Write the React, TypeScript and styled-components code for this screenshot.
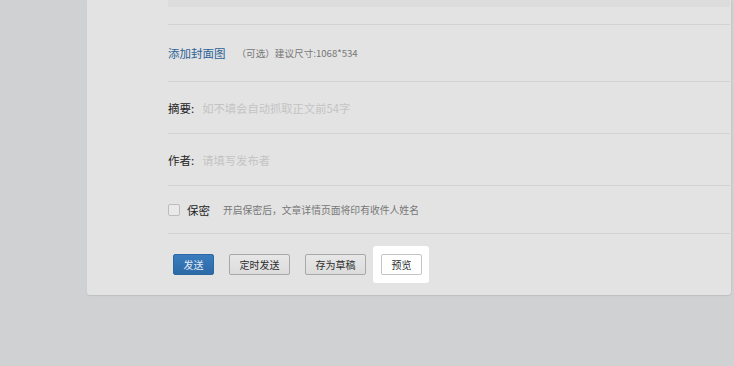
import React from "react";
import styled, { createGlobalStyle } from "styled-components";

const GlobalStyle = createGlobalStyle`
  html, body {
    margin: 0;
    padding: 0;
    background: #d0d1d3;
    font-family: "Noto Sans CJK SC", "Noto Sans", "Liberation Sans", sans-serif;
  }
`;

const Page = styled.div`
  width: 734px;
  height: 366px;
  box-sizing: border-box;
  padding: 0 3px 0 87px;
  overflow: hidden;
`;

const Card = styled.div`
  background: #e3e3e3;
  border-radius: 0 0 3px 3px;
  box-shadow: 0 1px 1px rgba(0, 0, 0, 0.08), 1px 0 1px rgba(0, 0, 0, 0.04);
  padding: 0 1px 0 81px;
`;

const EditorTail = styled.div`
  height: 7px;
  background: #dcdcdc;
  margin-bottom: 17px;
`;

const Row = styled.div<{ $h: number }>`
  display: flex;
  align-items: center;
  height: ${p => p.$h}px;
  box-sizing: border-box;
  border-top: 1px solid #d3d3d3;
`;

const CoverLink = styled.a`
  color: #2c6296;
  font-size: 11.5px;
  text-decoration: none;
  margin-right: 11px;
`;

const Hint = styled.span<{ $size?: number }>`
  color: #777;
  font-size: ${p => p.$size ?? 9.6}px;
`;

const Label = styled.span`
  color: #242424;
  font-size: 11.5px;
  margin-right: 8px;
`;

const Placeholder = styled.span`
  color: #c3c3c3;
  font-size: 11.3px;
`;

const Checkbox = styled.span`
  width: 10px;
  height: 10px;
  border: 1px solid #bcbcbc;
  border-radius: 2px;
  background: #e9e9e9;
  margin-right: 7px;
`;

const SecretLabel = styled.span`
  color: #252525;
  font-size: 11.5px;
  margin-right: 13px;
`;

const Actions = styled.div`
  display: flex;
  align-items: center;
  gap: 15px;
  border-top: 1px solid #d3d3d3;
  padding: 12px 0 12px 5px;
`;

const Button = styled.button<{ $kind?: "primary" | "default" | "lit" }>`
  height: 21px;
  box-sizing: border-box;
  padding: 0 9.5px;
  font-family: inherit;
  font-size: 10px;
  line-height: 19px;
  border-radius: 2px;
  cursor: pointer;
  border: 1px solid
    ${p => (p.$kind === "primary" ? "#2d68a3" : p.$kind === "lit" ? "#c4c4c4" : "#a8a8a8")};
  color: ${p => (p.$kind === "primary" ? "#e4ebf3" : "#2e2e2e")};
  background: ${p =>
    p.$kind === "primary"
      ? "linear-gradient(#3a7cbd, #2c6aa6)"
      : p.$kind === "lit"
      ? "#ffffff"
      : "linear-gradient(#e7e7e7, #dcdcdc)"};
`;

const Spotlight = styled.div`
  background: #ffffff;
  border-radius: 3px;
  padding: 8px 7px 8px 8px;
  margin-left: -8px;
  display: flex;
`;

export default function App() {
  return (
    <>
      <GlobalStyle />
      <Page>
        <Card>
          <EditorTail />
          <Row $h={57}>
            <CoverLink href="#">添加封面图</CoverLink>
            <Hint>（可选）建议尺寸:1068*534</Hint>
          </Row>
          <Row $h={52}>
            <Label>摘要:</Label>
            <Placeholder>如不填会自动抓取正文前54字</Placeholder>
          </Row>
          <Row $h={52}>
            <Label>作者:</Label>
            <Placeholder>请填写发布者</Placeholder>
          </Row>
          <Row $h={48}>
            <Checkbox />
            <SecretLabel>保密</SecretLabel>
            <Hint $size={9.8}>开启保密后，文章详情页面将印有收件人姓名</Hint>
          </Row>
          <Actions>
            <Button $kind="primary">发送</Button>
            <Button>定时发送</Button>
            <Button>存为草稿</Button>
            <Spotlight>
              <Button $kind="lit">预览</Button>
            </Spotlight>
          </Actions>
        </Card>
      </Page>
    </>
  );
}
